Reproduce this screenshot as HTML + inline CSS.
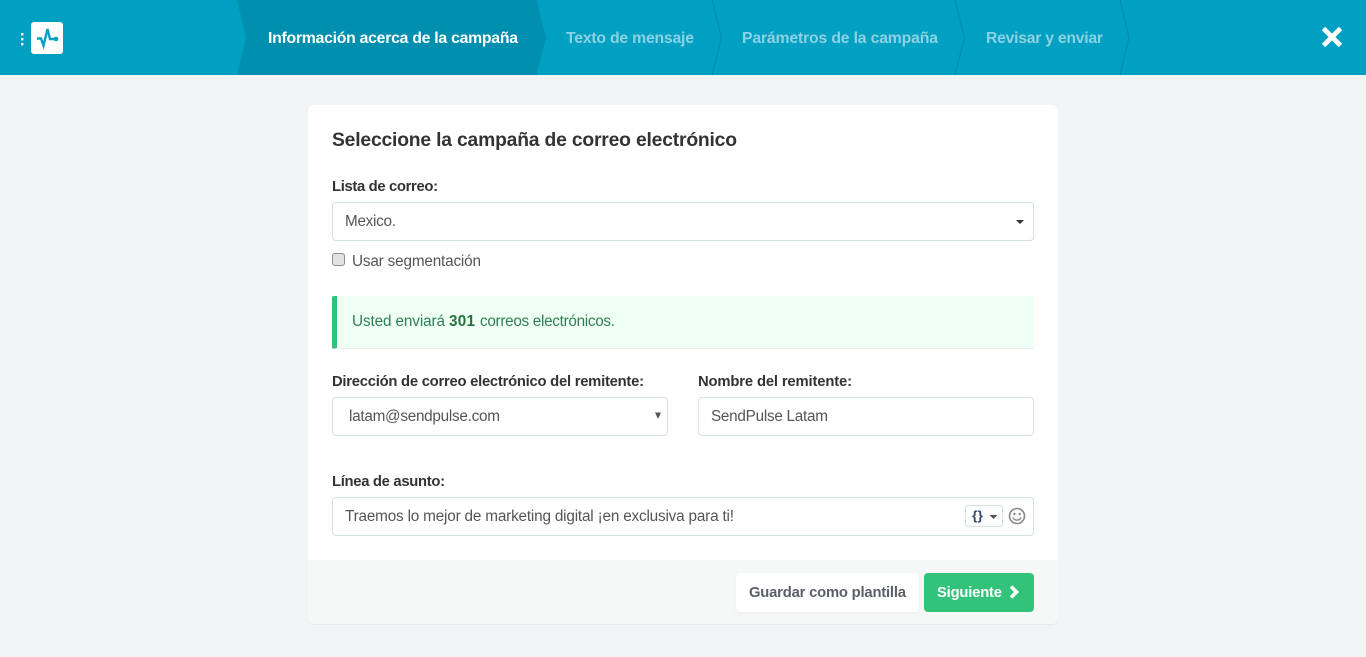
<!DOCTYPE html>
<html lang="es">
<head>
<meta charset="utf-8">
<title>Información acerca de la campaña</title>
<style>
html,body{margin:0;padding:0;width:1366px;height:657px;overflow:hidden;background:#f1f5f6;font-family:"Liberation Sans",sans-serif}
.b{position:absolute;box-sizing:border-box}
.field{background:#fff;border:1px solid #d5e2e2;border-radius:4px}
svg{position:absolute;left:0;top:0}
text{font-family:"Liberation Sans",sans-serif}
.lab{font-size:14.8px;font-weight:700;fill:#333}
.val{font-size:15.3px;fill:#555}
.step{font-size:15.8px;font-weight:700;fill:#8dd2e2}
</style>
</head>
<body>
<div class="b" style="left:308px;top:105px;width:750px;height:519px;background:#fff;border-radius:6px;box-shadow:0 1px 1px rgba(0,0,0,.05);overflow:hidden">
  <div class="b" style="left:0;top:455px;width:750px;height:64px;background:#f6f8f8"></div>
</div>
<div class="b field" style="left:332px;top:202px;width:702px;height:39px"></div>
<div class="b" style="left:332px;top:253px;width:13px;height:13px;background:#e2e2e2;border:1px solid #8f8f8f;border-radius:3px"></div>
<div class="b" style="left:332px;top:296px;width:702px;height:53px;background:#f0fff4;border-left:5px solid #2fc27a;border-bottom:1px solid #ececec;border-radius:2px 0 0 2px"></div>
<div class="b field" style="left:332px;top:397px;width:336px;height:39px"></div>
<div class="b field" style="left:698px;top:397px;width:336px;height:39px"></div>
<div class="b field" style="left:332px;top:497px;width:702px;height:39px"></div>
<div class="b field" style="left:965px;top:505px;width:38px;height:22px;border-radius:3px"></div>
<div class="b" style="left:736px;top:573px;width:183px;height:39px;background:#fff;border-radius:4px;box-shadow:0 1px 3px rgba(0,0,0,.05)"></div>
<div class="b" style="left:924px;top:573px;width:110px;height:39px;background:#32c27a;border-radius:4px"></div>

<svg width="1366" height="657" viewBox="0 0 1366 657" xmlns="http://www.w3.org/2000/svg">
  <!-- header -->
  <rect x="0" y="0" width="1366" height="75" fill="#00a0c3"/>
  <polygon points="237,0 536.5,0 546,37.5 536.5,75 237,75 246,37.5" fill="#008fae"/>
  <path d="M712 0L721.5 37.5L712 75M955 0L964.5 37.5L955 75M1120 0L1129 37.5L1120 75" fill="none" stroke="#008fae" stroke-width="1.3"/>
  <rect x="21" y="33" width="2.4" height="2.4" fill="#fff"/>
  <rect x="21" y="38" width="2.4" height="2.4" fill="#fff"/>
  <rect x="21" y="43" width="2.4" height="2.4" fill="#fff"/>
  <rect x="31" y="22" width="32" height="32" rx="3" fill="#fff"/>
  <path d="M37 38.5H41L43.5 45.5L47.5 29L50 39H56" fill="none" stroke="#00a0c3" stroke-width="2.4"/>
  <circle cx="56" cy="39" r="2.3" fill="#00a0c3"/>
  <path d="M1323.5 28.5L1340.5 45.5M1340.5 28.5L1323.5 45.5" stroke="#fff" stroke-width="4.8" fill="none"/>
  <text x="268" y="43" font-size="15.8" font-weight="700" fill="#fff" textLength="250" lengthAdjust="spacing">Información acerca de la campaña</text>
  <text class="step" x="566" y="43" textLength="128" lengthAdjust="spacing">Texto de mensaje</text>
  <text class="step" x="742" y="43" textLength="196" lengthAdjust="spacing">Parámetros de la campaña</text>
  <text class="step" x="986" y="43" textLength="117" lengthAdjust="spacing">Revisar y enviar</text>

  <!-- form text -->
  <text x="332" y="146" font-size="19.3" font-weight="700" fill="#333" textLength="405" lengthAdjust="spacing">Seleccione la campaña de correo electrónico</text>
  <text class="lab" x="332" y="191" textLength="106" lengthAdjust="spacing">Lista de correo:</text>
  <text class="val" x="345" y="226" textLength="51" lengthAdjust="spacing">Mexico.</text>
  <path d="M1016 220H1024L1020 224Z" fill="#333"/>
  <text class="val" x="352" y="266" textLength="129" lengthAdjust="spacing">Usar segmentación</text>

  <text x="352" y="326" font-size="15.3" fill="#2f7f55" textLength="93" lengthAdjust="spacing">Usted enviará</text>
  <text x="449" y="326" font-size="15.3" font-weight="700" fill="#23753f" textLength="26" lengthAdjust="spacing">301</text>
  <text x="480" y="326" font-size="15.3" fill="#2f7f55" textLength="135" lengthAdjust="spacing">correos electrónicos.</text>

  <text class="lab" x="332" y="386" textLength="312" lengthAdjust="spacing">Dirección de correo electrónico del remitente:</text>
  <text class="lab" x="698" y="386" textLength="154" lengthAdjust="spacing">Nombre del remitente:</text>
  <text class="val" x="349" y="421" textLength="151" lengthAdjust="spacing">latam@sendpulse.com</text>
  <path d="M655 412.5H661L658 419Z" fill="#555"/>
  <text class="val" x="711" y="421" textLength="117" lengthAdjust="spacing">SendPulse Latam</text>

  <text class="lab" x="332" y="486" textLength="113" lengthAdjust="spacing">Línea de asunto:</text>
  <text class="val" x="345" y="521" textLength="389" lengthAdjust="spacing">Traemos lo mejor de marketing digital ¡en exclusiva para ti!</text>
  <text x="972" y="520" font-size="13" font-weight="700" fill="#2f4a66" textLength="11" lengthAdjust="spacingAndGlyphs">{}</text>
  <path d="M989.5 515H997.5L993.5 519Z" fill="#555"/>
  <circle cx="1017" cy="516" r="7.5" fill="none" stroke="#888" stroke-width="1.6"/>
  <circle cx="1014.3" cy="514" r="1.2" fill="#888"/>
  <circle cx="1019.7" cy="514" r="1.2" fill="#888"/>
  <path d="M1013 517.5C1014.5 521 1019.5 521 1021 517.5" fill="none" stroke="#888" stroke-width="1.5"/>

  <text x="749" y="597" font-size="14.8" font-weight="700" fill="#5b5f66" textLength="157" lengthAdjust="spacing">Guardar como plantilla</text>
  <text x="937" y="597" font-size="14.8" font-weight="700" fill="#fff" textLength="65" lengthAdjust="spacing">Siguiente</text>
  <path d="M1011 586.5L1016.5 592L1011 597.5" fill="none" stroke="#fff" stroke-width="3.6"/>
</svg>
</body>
</html>
